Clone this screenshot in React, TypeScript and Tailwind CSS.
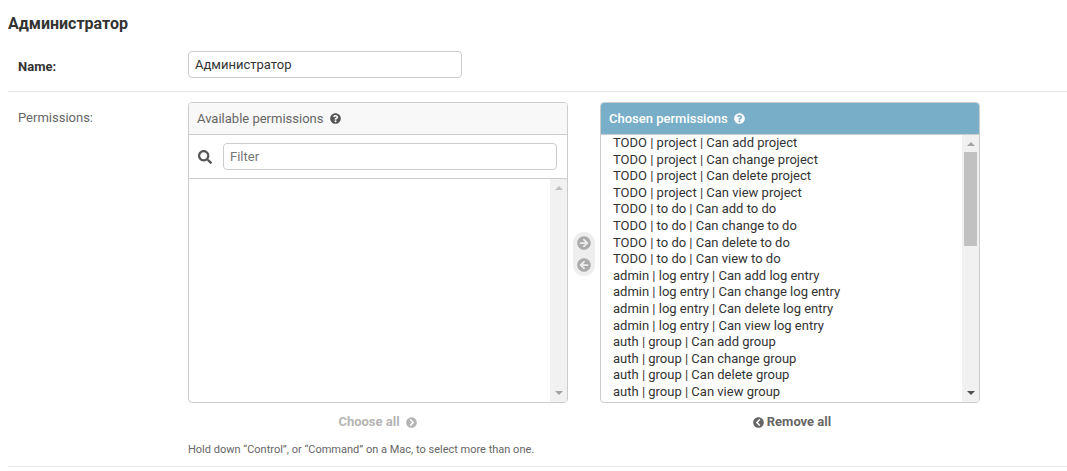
import React from 'react';
import {
  FaQuestionCircle,
  FaSearch,
  FaArrowCircleRight,
  FaArrowCircleLeft,
  FaChevronCircleRight,
  FaChevronCircleLeft,
} from 'react-icons/fa';

const chosen = [
  'TODO | project | Can add project',
  'TODO | project | Can change project',
  'TODO | project | Can delete project',
  'TODO | project | Can view project',
  'TODO | to do | Can add to do',
  'TODO | to do | Can change to do',
  'TODO | to do | Can delete to do',
  'TODO | to do | Can view to do',
  'admin | log entry | Can add log entry',
  'admin | log entry | Can change log entry',
  'admin | log entry | Can delete log entry',
  'admin | log entry | Can view log entry',
  'auth | group | Can add group',
  'auth | group | Can change group',
  'auth | group | Can delete group',
  'auth | group | Can view group',
];

const ScrollBar: React.FC<{ thumb?: boolean }> = ({ thumb }) => {
  const arrow = thumb ? 'border-t-[#505050]' : 'border-t-[#a3a3a3]';
  const arrowUp = thumb ? 'border-b-[#a3a3a3]' : 'border-b-[#c0c0c0]';
  return (
    <div className="flex h-full w-[17px] shrink-0 flex-col items-center bg-[#f1f1f1]">
      <div className={`mt-[7px] h-0 w-0 border-x-[4px] border-b-[4px] border-x-transparent ${arrowUp}`} />
      {thumb && <div className="mt-[6px] h-[94px] w-[13px] bg-[#c1c1c1]" />}
      <div className={`mt-auto mb-[7px] h-0 w-0 border-x-[4px] border-t-[4px] border-x-transparent ${arrow}`} />
    </div>
  );
};

export default function App() {
  return (
    <div className="h-[471px] w-[1067px] overflow-hidden bg-white pl-2 font-['Roboto',sans-serif] text-[13px] text-[#333]">
      {/* Заголовок */}
      <h2 className="pt-[14px] text-[16px] leading-[20px] font-bold text-[#333]">Администратор</h2>

      {/* Name */}
      <div className="mt-[17px] flex h-[41px] items-start border-b border-[#e8e8e8] pl-[10px]">
        <label className="mt-[7px] w-[170px] leading-[17px] font-bold">Name:</label>
        <input
          readOnly
          value="Администратор"
          className="h-[27px] w-[274px] rounded border border-[#ccc] px-[6px] text-[13px] text-[#333] outline-none"
        />
      </div>

      {/* Permissions */}
      <div className="flex h-[375px] items-start border-b border-[#e8e8e8] pl-[10px] pt-[10px]">
        <label className="mt-[7px] w-[170px] leading-[17px] text-[#666]">Permissions:</label>
        <div>
          <div className="flex items-start">
            {/* Available */}
            <div className="w-[380px]">
              <div className="flex h-[301px] flex-col overflow-hidden rounded border border-[#ccc]">
                <div className="flex h-[32px] shrink-0 items-center gap-[7px] border-b border-[#ccc] bg-[#f8f8f8] pl-2 text-[#666]">
                  <span className="text-[13px]">Available permissions</span>
                  <FaQuestionCircle className="h-[11px] w-[11px] text-[#555]" />
                </div>
                <div className="flex h-[44px] shrink-0 items-center border-b border-[#ccc] pl-[9px]">
                  <FaSearch className="h-[14px] w-[14px] text-[#555]" />
                  <input
                    readOnly
                    placeholder="Filter"
                    className="ml-[11px] h-[27px] w-[334px] rounded border border-[#ccc] px-[6px] text-[13px] text-[#333] outline-none placeholder:text-[#757575]"
                  />
                </div>
                <div className="flex min-h-0 flex-1 justify-end">
                  <ScrollBar />
                </div>
              </div>
              <div className="mt-[11px] flex items-center justify-center gap-[6px] pr-[1px] font-bold leading-[15px] text-[#b5b5b5]">
                <span>Choose all</span>
                <FaChevronCircleRight className="mt-[1px] h-[11px] w-[11px]" />
              </div>
            </div>

            {/* Стрелки */}
            <div className="mx-[5px] mt-[130px] flex h-[44px] w-[22px] flex-col items-center justify-center gap-[8px] rounded-[11px] bg-[#eee] text-[#aaa]">
              <FaArrowCircleRight className="h-[14px] w-[14px]" />
              <FaArrowCircleLeft className="h-[14px] w-[14px]" />
            </div>

            {/* Chosen */}
            <div className="w-[380px]">
              <div className="flex h-[301px] flex-col overflow-hidden rounded border border-[#ccc]">
                <div className="flex h-[32px] shrink-0 items-center gap-[6px] border-b border-[#ccc] bg-[#79aec8] pl-2 text-white">
                  <span className="text-[13px] font-medium">Chosen permissions</span>
                  <FaQuestionCircle className="h-[11px] w-[11px]" />
                </div>
                <div className="flex min-h-0 flex-1">
                  <ul className="flex-1 pl-3 text-[13px] leading-[16.6px] text-[#333]">
                    {chosen.map((item) => (
                      <li key={item} className="whitespace-nowrap">
                        {item}
                      </li>
                    ))}
                  </ul>
                  <ScrollBar thumb />
                </div>
              </div>
              <div className="mt-[11px] flex items-center justify-center gap-[3px] pl-[4px] font-bold leading-[15px] text-[#666]">
                <FaChevronCircleLeft className="mt-[1px] h-[11px] w-[11px]" />
                <span>Remove all</span>
              </div>
            </div>
          </div>
          <p className="mt-[14px] text-[11px] leading-[14px] text-[#666]">
            Hold down “Control”, or “Command” on a Mac, to select more than one.
          </p>
        </div>
      </div>
    </div>
  );
}
